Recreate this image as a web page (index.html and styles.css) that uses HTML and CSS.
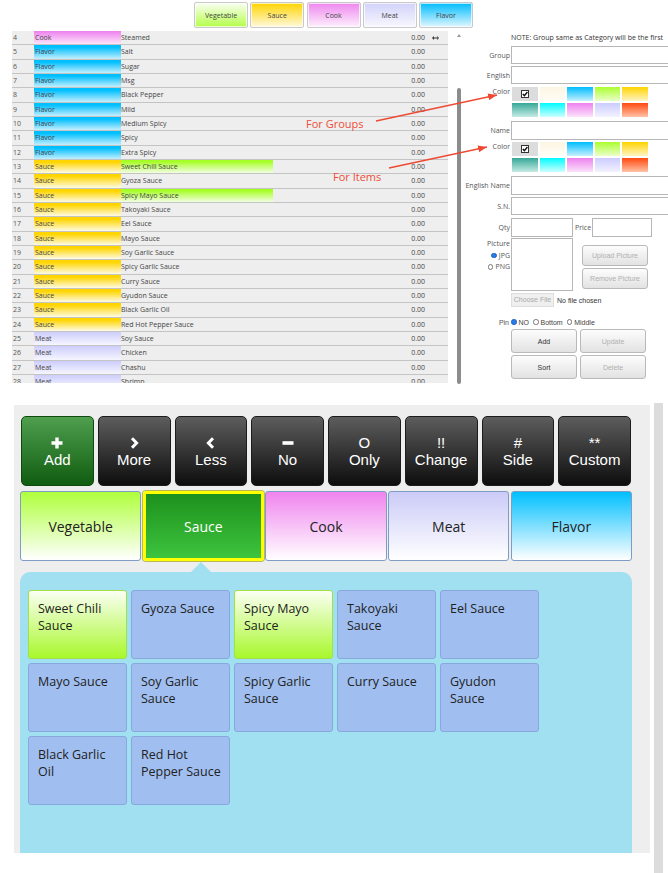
FILE: index.html
```html
<!DOCTYPE html>
<html lang="en">
<head>
<meta charset="utf-8">
<title>Modifier Setup</title>
<link rel="stylesheet" href="styles.css">
</head>
<body>
<section class="admin">
  <div class="tabs">
    <div class="tab t-veg">Vegetable</div>
    <div class="tab t-sauce">Sauce</div>
    <div class="tab t-cook">Cook</div>
    <div class="tab t-meat">Meat</div>
    <div class="tab t-flavor">Flavor</div>
  </div>
  <div class="admin-body">
    <div class="table">
      <div class="row"><span class="num">4</span><span class="cat c-cook">Cook</span><span class="name">Steamed</span><span class="price">0.00</span><span class="mv"><svg width="7" height="4" viewBox="0 0 7 4"><path d="M1.5 1.5h4v1h-4z M0 2l2-2v4z M7 2l-2-2v4z" fill="#333"/></svg></span></div>
      <div class="row"><span class="num">5</span><span class="cat c-flavor">Flavor</span><span class="name">Salt</span><span class="price">0.00</span></div>
      <div class="row"><span class="num">6</span><span class="cat c-flavor">Flavor</span><span class="name">Sugar</span><span class="price">0.00</span></div>
      <div class="row"><span class="num">7</span><span class="cat c-flavor">Flavor</span><span class="name">Msg</span><span class="price">0.00</span></div>
      <div class="row"><span class="num">8</span><span class="cat c-flavor">Flavor</span><span class="name">Black Pepper</span><span class="price">0.00</span></div>
      <div class="row"><span class="num">9</span><span class="cat c-flavor">Flavor</span><span class="name">Mild</span><span class="price">0.00</span></div>
      <div class="row"><span class="num">10</span><span class="cat c-flavor">Flavor</span><span class="name">Medium Spicy</span><span class="price">0.00</span></div>
      <div class="row"><span class="num">11</span><span class="cat c-flavor">Flavor</span><span class="name">Spicy</span><span class="price">0.00</span></div>
      <div class="row"><span class="num">12</span><span class="cat c-flavor">Flavor</span><span class="name">Extra Spicy</span><span class="price">0.00</span></div>
      <div class="row"><span class="num">13</span><span class="cat c-sauce">Sauce</span><span class="name n-green">Sweet Chili Sauce</span><span class="price">0.00</span></div>
      <div class="row"><span class="num">14</span><span class="cat c-sauce">Sauce</span><span class="name">Gyoza Sauce</span><span class="price">0.00</span></div>
      <div class="row"><span class="num">15</span><span class="cat c-sauce">Sauce</span><span class="name n-green">Spicy Mayo Sauce</span><span class="price">0.00</span></div>
      <div class="row"><span class="num">16</span><span class="cat c-sauce">Sauce</span><span class="name">Takoyaki Sauce</span><span class="price">0.00</span></div>
      <div class="row"><span class="num">17</span><span class="cat c-sauce">Sauce</span><span class="name">Eel Sauce</span><span class="price">0.00</span></div>
      <div class="row"><span class="num">18</span><span class="cat c-sauce">Sauce</span><span class="name">Mayo Sauce</span><span class="price">0.00</span></div>
      <div class="row"><span class="num">19</span><span class="cat c-sauce">Sauce</span><span class="name">Soy Garlic Sauce</span><span class="price">0.00</span></div>
      <div class="row"><span class="num">20</span><span class="cat c-sauce">Sauce</span><span class="name">Spicy Garlic Sauce</span><span class="price">0.00</span></div>
      <div class="row"><span class="num">21</span><span class="cat c-sauce">Sauce</span><span class="name">Curry Sauce</span><span class="price">0.00</span></div>
      <div class="row"><span class="num">22</span><span class="cat c-sauce">Sauce</span><span class="name">Gyudon Sauce</span><span class="price">0.00</span></div>
      <div class="row"><span class="num">23</span><span class="cat c-sauce">Sauce</span><span class="name">Black Garlic Oil</span><span class="price">0.00</span></div>
      <div class="row"><span class="num">24</span><span class="cat c-sauce">Sauce</span><span class="name">Red Hot Pepper Sauce</span><span class="price">0.00</span></div>
      <div class="row"><span class="num">25</span><span class="cat c-meat">Meat</span><span class="name">Soy Sauce</span><span class="price">0.00</span></div>
      <div class="row"><span class="num">26</span><span class="cat c-meat">Meat</span><span class="name">Chicken</span><span class="price">0.00</span></div>
      <div class="row"><span class="num">27</span><span class="cat c-meat">Meat</span><span class="name">Chashu</span><span class="price">0.00</span></div>
      <div class="row"><span class="num">28</span><span class="cat c-meat">Meat</span><span class="name">Shrimp</span><span class="price">0.00</span></div>
    </div>
    <div class="vscroll"><span class="up"></span><span class="thumb"></span></div>
    <div class="form">
      <div class="note">NOTE: Group same as Category will be the first</div>
      <div class="frow r-group"><span class="lbl">Group</span><span class="inp"></span></div>
      <div class="frow r-english"><span class="lbl">English</span><span class="inp"></span></div>
      <div class="frow top r-color1"><span class="lbl lbl-color">Color</span>
        <div class="colors">
          <span class="sw sw-check"><svg width="8" height="8" viewBox="0 0 8 8"><rect x="0.5" y="0.5" width="7" height="7" fill="#fff" stroke="#333"/><path d="M1.8 4l1.6 1.6 3-3.6" fill="none" stroke="#111" stroke-width="1.4"/></svg></span>
          <span class="sw sw-cream"></span><span class="sw sw-blue"></span><span class="sw sw-green"></span><span class="sw sw-yellow"></span>
          <span class="sw sw-teal"></span><span class="sw sw-cyan"></span><span class="sw sw-pink"></span><span class="sw sw-lav"></span><span class="sw sw-orange"></span>
        </div>
      </div>
      <div class="frow r-name"><span class="lbl">Name</span><span class="inp"></span></div>
      <div class="frow top r-color2"><span class="lbl lbl-color">Color</span>
        <div class="colors">
          <span class="sw sw-check"><svg width="8" height="8" viewBox="0 0 8 8"><rect x="0.5" y="0.5" width="7" height="7" fill="#fff" stroke="#333"/><path d="M1.8 4l1.6 1.6 3-3.6" fill="none" stroke="#111" stroke-width="1.4"/></svg></span>
          <span class="sw sw-cream"></span><span class="sw sw-blue"></span><span class="sw sw-green"></span><span class="sw sw-yellow"></span>
          <span class="sw sw-teal"></span><span class="sw sw-cyan"></span><span class="sw sw-pink"></span><span class="sw sw-lav"></span><span class="sw sw-orange"></span>
        </div>
      </div>
      <div class="frow r-ename"><span class="lbl">English Name</span><span class="inp"></span></div>
      <div class="frow r-sn"><span class="lbl">S.N.</span><span class="inp"></span></div>
      <div class="frow r-qty"><span class="lbl">Qty</span><span class="inp inp-qty"></span><span class="plbl">Price</span><span class="inp inp-price"></span></div>
      <div class="frow top r-pic">
        <div class="lbl piclbl">
          <div class="pl">Picture</div>
          <div class="pl"><span class="rad on"></span>JPG</div>
          <div class="pl"><span class="rad"></span>PNG</div>
        </div>
        <div class="ta"></div>
        <div class="picbtns">
          <div class="btn dis b-up">Upload Picture</div>
          <div class="btn dis b-rm">Remove Picture</div>
        </div>
      </div>
      <div class="frow r-file"><span class="choose">Choose File</span><span class="nofile">No file chosen</span></div>
      <div class="frow r-pin"><span class="lbl lbl-pin">Pin</span>
        <span class="rad on"></span><span class="opt">NO</span>
        <span class="rad"></span><span class="opt">Bottom</span>
        <span class="rad"></span><span class="opt">Middle</span>
      </div>
      <div class="btns">
        <div class="btn">Add</div>
        <div class="btn dis">Update</div>
        <div class="btn">Sort</div>
        <div class="btn dis">Delete</div>
      </div>
    </div>
  </div>
  <svg class="annot" width="668" height="392" viewBox="0 0 668 392">
    <defs>
      <marker id="ah" markerUnits="userSpaceOnUse" markerWidth="9" markerHeight="7" refX="9" refY="3.5" orient="auto">
        <path d="M0 0L9 3.5L0 7z" fill="#ee4a33"/>
      </marker>
    </defs>
    <line x1="376" y1="121" x2="497" y2="95" stroke="#ee4a33" stroke-width="1.3" marker-end="url(#ah)"/>
    <line x1="389" y1="168" x2="487" y2="147" stroke="#ee4a33" stroke-width="1.3" marker-end="url(#ah)"/>
    <text x="306" y="128" class="annot-text">For Groups</text>
    <text x="333" y="181" class="annot-text">For Items</text>
  </svg>
</section>

<section class="pos-wrap">
  <div class="pos">
    <div class="fn-row">
      <div class="fn add"><span class="sym"><svg width="12" height="12" viewBox="0 0 12 12"><path d="M6 0.5v11M0.5 6h11" stroke="#fff" stroke-width="3.4"/></svg></span><span class="fl">Add</span></div>
      <div class="fn"><span class="sym"><svg width="9" height="12" viewBox="0 0 9 12"><path d="M2 1.3l4.6 4.7-4.6 4.7" fill="none" stroke="#fff" stroke-width="3"/></svg></span><span class="fl">More</span></div>
      <div class="fn"><span class="sym"><svg width="9" height="12" viewBox="0 0 9 12"><path d="M7 1.3l-4.6 4.7 4.6 4.7" fill="none" stroke="#fff" stroke-width="3"/></svg></span><span class="fl">Less</span></div>
      <div class="fn"><span class="sym"><svg width="12" height="12" viewBox="0 0 12 12"><path d="M0.5 6h11" stroke="#fff" stroke-width="3.6"/></svg></span><span class="fl">No</span></div>
      <div class="fn"><span class="sym">O</span><span class="fl">Only</span></div>
      <div class="fn"><span class="sym">!!</span><span class="fl">Change</span></div>
      <div class="fn"><span class="sym">#</span><span class="fl">Side</span></div>
      <div class="fn"><span class="sym">**</span><span class="fl">Custom</span></div>
    </div>
    <div class="cat-row">
      <div class="cbtn cb-veg">Vegetable</div>
      <div class="cbtn cb-sauce">Sauce</div>
      <div class="cbtn cb-cook">Cook</div>
      <div class="cbtn cb-meat">Meat</div>
      <div class="cbtn cb-flavor">Flavor</div>
    </div>
    <div class="pointer"></div>
    <div class="items-panel">
      <div class="grid">
        <div class="item hl">Sweet Chili Sauce</div>
        <div class="item">Gyoza Sauce</div>
        <div class="item hl">Spicy Mayo Sauce</div>
        <div class="item">Takoyaki Sauce</div>
        <div class="item">Eel Sauce</div>
        <div class="item">Mayo Sauce</div>
        <div class="item">Soy Garlic Sauce</div>
        <div class="item">Spicy Garlic Sauce</div>
        <div class="item">Curry Sauce</div>
        <div class="item">Gyudon Sauce</div>
        <div class="item">Black Garlic Oil</div>
        <div class="item">Red Hot Pepper Sauce</div>
      </div>
    </div>
  </div>
  <div class="track"></div>
</section>
</body>
</html>
```
FILE: styles.css
```css
* { box-sizing: border-box; }
html, body { margin: 0; padding: 0; }
body {
  width: 668px;
  height: 873px;
  overflow: hidden;
  background: #fff;
  font-family: "Open Sans", "Liberation Sans", sans-serif;
}

/* ---------- admin screenshot (top) ---------- */
.admin { position: relative; height: 392px; overflow: hidden; }

.tabs { display: flex; gap: 2.25px; padding: 2px 0 0 194px; height: 31px; }
.tab {
  width: 54px; height: 26px;
  border: 1px solid #c9c9c9; border-radius: 2px;
  box-shadow: inset 0 0 0 1px rgba(255,255,255,0.7);
  display: flex; align-items: center; justify-content: center;
  font-size: 7px; color: #444;
}
.t-veg { background: linear-gradient(#fafff2, #b4ff48); }
.t-sauce { background: linear-gradient(#ffd400, #fff9dc); }
.t-cook { background: linear-gradient(#ee86ee, #fdf0fd); }
.t-meat { background: linear-gradient(#d2d2fa, #f8f8ff); }
.t-flavor { background: linear-gradient(#00bcff, #e0f7ff); }

.admin-body { display: flex; align-items: flex-start; }

.table {
  flex: none; margin-left: 12px; width: 436px; height: 352px;
  overflow: hidden; background: #eeeeee;
}
.row {
  display: flex; height: 14.33px;
  border-bottom: 1px solid #c4c4c4;
  font-size: 7px; line-height: 13.33px; color: #444;
  white-space: nowrap;
}
.row > span { height: 13.33px; }
.num { width: 22px; padding-left: 1px; color: #555; }
.cat { width: 87px; padding-left: 1px; }
.name { width: 152px; }
.price { width: 152px; text-align: right; }
.mv { width: 23px; padding-left: 7px; display: flex; align-items: center; }
.c-cook { background: linear-gradient(#ee80ee, #fbe4fb); }
.c-flavor { background: linear-gradient(#00bfff 15%, #c4efff); }
.c-sauce { background: linear-gradient(#ffd500 15%, #fffbe4); }
.c-meat { background: linear-gradient(#cdcdfc, #f6f6ff); }
.n-green { background: linear-gradient(#a4ff22 10%, #f2ffe2); }

.vscroll {
  flex: none; display: flex; flex-direction: column; align-items: center;
  margin-left: 7px; width: 7px; height: 353px;
}
.up {
  width: 0; height: 0; margin-top: 3px;
  border-left: 2px solid transparent; border-right: 2px solid transparent;
  border-bottom: 3px solid #9a9a9a;
}
.thumb { width: 4px; flex: 1; margin-top: 51px; background: #8c8c8c; border-radius: 2px; }

.form { flex: none; width: 220px; margin-left: 3px; font-size: 7px; color: #555; }
.note { height: 14px; line-height: 14px; padding-left: 46px; color: #333; white-space: nowrap; }
.frow { display: flex; align-items: center; }
.frow.top { align-items: flex-start; }
.lbl { flex: none; width: 46px; text-align: right; padding-right: 1px; white-space: nowrap; }
.inp { flex: none; display: block; width: 170px; height: 18px; border: 1px solid #b6b6b6; background: #fff; }

.r-group { margin-top: 1px; }
.r-english { margin-top: 2px; }
.r-color1 { margin-top: 3px; }
.r-name { margin-top: 4px; }
.r-name .inp { height: 19px; }
.r-color2 { margin-top: 2px; }
.r-ename { margin-top: 4px; }
.r-ename .inp { height: 19px; }
.r-sn { margin-top: 2px; }
.r-qty { margin-top: 3px; }
.r-qty .inp { height: 19px; }
.lbl-color { line-height: 8px; padding-top: 1px; }

.colors {
  display: grid; grid-template-columns: repeat(5, 25.5px); grid-auto-rows: 14px;
  gap: 2px; margin-left: 1px;
}
.sw { display: block; }
.sw-check { background: #dcdcdc; display: flex; align-items: center; justify-content: center; }
.sw-cream { background: linear-gradient(#fcf5e2, #fffdf6); }
.sw-blue { background: linear-gradient(#00bdff, #c6f0ff); }
.sw-green { background: linear-gradient(#acff30, #eaffca); }
.sw-yellow { background: linear-gradient(#ffd400, #fff4c4); }
.sw-teal { background: linear-gradient(#36a898, #c6ebe5); }
.sw-cyan { background: linear-gradient(#00fcff, #ccffff); }
.sw-pink { background: linear-gradient(#ee82ee, #fbe2fb); }
.sw-lav { background: linear-gradient(#ccccff, #f2f2ff); }
.sw-orange { background: linear-gradient(#ff4a10, #ffc2a6); }

.inp-qty { width: 62px; }
.plbl { flex: none; width: 19px; padding-left: 2px; color: #555; }
.inp-price { width: 60px; }

.r-pic { margin-top: 1px; }
.piclbl { padding-right: 1px; }
.pl { height: 11.5px; line-height: 11.5px; display: flex; align-items: center; justify-content: flex-end; }
.ta { flex: none; width: 62px; height: 53px; border: 1px solid #b6b6b6; background: #fff; }
.picbtns { display: flex; flex-direction: column; gap: 2px; margin: 7px 0 0 9px; }

.rad {
  flex: none; display: inline-block; width: 5.5px; height: 5.5px; border-radius: 50%;
  border: 1px solid #777; background: #fff; margin-right: 2px;
}
.rad.on { background: #2b7de6; border-color: #1b5fc4; }

.btn {
  display: flex; align-items: center; justify-content: center;
  background: linear-gradient(#fdfdfd, #e2e2e2);
  border: 1px solid #b9b9b9; border-radius: 3px;
  font-family: "Liberation Sans", Arial, sans-serif; font-size: 7px; color: #333;
}
.btn.dis { color: #b0b0b0; }
.b-up, .b-rm { width: 66px; height: 21px; }

.r-file { margin-top: 2px; padding-left: 46px; font-family: "Liberation Sans", Arial, sans-serif; }
.choose {
  flex: none; width: 43px; height: 14px; line-height: 12px; text-align: center;
  background: #efefef; border: 1px solid #dedede; color: #aaa;
}
.nofile { margin-left: 3px; color: #333; }

.r-pin { margin-top: 9px; height: 12px; font-family: "Liberation Sans", Arial, sans-serif; }
.lbl-pin { padding-right: 2px; }
.opt { margin-right: 4px; color: #444; }

.btns {
  display: grid; grid-template-columns: 66px 66px; grid-auto-rows: 24px;
  gap: 2px 3px; margin: 1px 0 0 46px;
}

.annot { position: absolute; left: 0; top: 0; pointer-events: none; }
.annot-text { font-family: "Open Sans", sans-serif; font-size: 11px; fill: #ef4d37; }

/* ---------- POS modifier screen (bottom) ---------- */
.pos-wrap { display: flex; margin-top: 11px; padding-left: 14px; }
.pos {
  flex: none; width: 636px; height: 448px; margin-top: 2px;
  background: #eeeeee; padding: 11px 0 0 6px; overflow: hidden;
}
.track { flex: none; width: 9px; height: 470px; margin-left: 4px; background: #dcdcdc; }

.fn-row { display: flex; gap: 4px; margin-left: 1px; }
.fn {
  flex: none; width: 72.75px; height: 70px;
  background: linear-gradient(#5d5d5d, #0d0d0d);
  border: 1px solid #1c1c1c; border-radius: 5px;
  color: #fff; display: flex; flex-direction: column; align-items: center; justify-content: center;
  font-family: "Liberation Sans", Arial, sans-serif; font-size: 15px; line-height: 17px;
}
.fn.add { background: linear-gradient(#4f9f4f, #105c10); border-color: #0e4a0e; }
.sym { height: 17px; display: flex; align-items: center; justify-content: center; }
.fl { height: 17px; }

.cat-row {
  display: grid; grid-template-columns: repeat(5, 1fr); gap: 1.5px;
  width: 612px; height: 70px; margin-top: 5px;
}
.cbtn {
  display: flex; align-items: center; justify-content: center;
  border: 1px solid #7f9dc4; border-radius: 3px;
  font-size: 14px; color: #222;
}
.cb-veg { background: linear-gradient(#afff3c, #ffffff); }
.cb-sauce {
  background: linear-gradient(#1d911d, #3dc43d);
  border: 3px solid #ffff00; box-shadow: 0 0 0 1px #b8b860;
  color: #fff;
}
.cb-cook { background: linear-gradient(#ef84ee, #ffffff); }
.cb-meat { background: linear-gradient(#cbcbf8, #ffffff); }
.cb-flavor { background: linear-gradient(#00bfff, #ffffff); }

.pointer {
  width: 0; height: 0; margin: 1px 0 0 171px;
  border-left: 10px solid transparent; border-right: 10px solid transparent;
  border-bottom: 10px solid #a0e0f0;
}
.items-panel {
  width: 612px; height: 281px; background: #a0e0f0;
  border-radius: 10px 10px 0 0; padding: 18px 8px 0;
}
.grid { display: grid; grid-template-columns: repeat(5, 99px); grid-auto-rows: 69px; gap: 4px; }
.item {
  background: #a0bff0; border: 1px solid #88a8dd; border-radius: 3px;
  padding: 9px 7px 9px 9px; font-size: 12.5px; line-height: 17px; color: #222;
}
.item.hl { background: linear-gradient(#fbfff4, #a8f82c); border-color: #a2e048; }
```
